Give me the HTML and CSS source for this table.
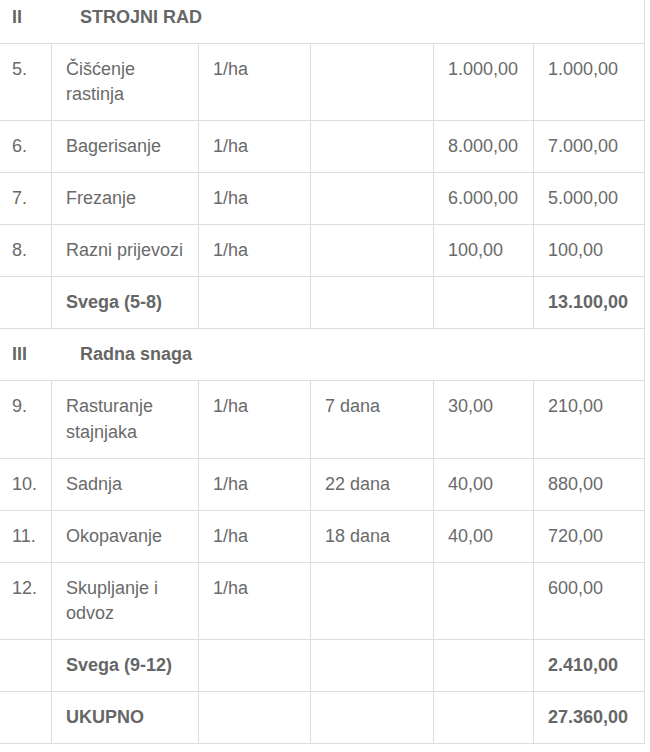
FILE: index.html
```html
<!DOCTYPE html>
<html lang="hr">
<head>
<meta charset="utf-8">
<title>Troškovi</title>
<link rel="stylesheet" href="styles.css">
</head>
<body>
<table class="cost-table">
  <colgroup>
    <col class="c1"><col class="c2"><col class="c3"><col class="c4"><col class="c5"><col class="c6">
  </colgroup>
  <tbody>
    <tr class="section">
      <td colspan="6"><span class="sec-num">II</span><span class="sec-title">STROJNI RAD</span></td>
    </tr>
    <tr>
      <td>5.</td><td>Čišćenje rastinja</td><td>1/ha</td><td></td><td>1.000,00</td><td>1.000,00</td>
    </tr>
    <tr>
      <td>6.</td><td>Bagerisanje</td><td>1/ha</td><td></td><td>8.000,00</td><td>7.000,00</td>
    </tr>
    <tr>
      <td>7.</td><td>Frezanje</td><td>1/ha</td><td></td><td>6.000,00</td><td>5.000,00</td>
    </tr>
    <tr>
      <td>8.</td><td>Razni prijevozi</td><td>1/ha</td><td></td><td>100,00</td><td>100,00</td>
    </tr>
    <tr class="total">
      <td></td><td>Svega (5-8)</td><td></td><td></td><td></td><td>13.100,00</td>
    </tr>
    <tr class="section">
      <td colspan="6"><span class="sec-num">III</span><span class="sec-title">Radna snaga</span></td>
    </tr>
    <tr>
      <td>9.</td><td>Rasturanje stajnjaka</td><td>1/ha</td><td>7 dana</td><td>30,00</td><td>210,00</td>
    </tr>
    <tr>
      <td>10.</td><td>Sadnja</td><td>1/ha</td><td>22 dana</td><td>40,00</td><td>880,00</td>
    </tr>
    <tr>
      <td>11.</td><td>Okopavanje</td><td>1/ha</td><td>18 dana</td><td>40,00</td><td>720,00</td>
    </tr>
    <tr>
      <td>12.</td><td>Skupljanje i odvoz</td><td>1/ha</td><td></td><td></td><td>600,00</td>
    </tr>
    <tr class="total">
      <td></td><td>Svega (9-12)</td><td></td><td></td><td></td><td>2.410,00</td>
    </tr>
    <tr class="total">
      <td></td><td>UKUPNO</td><td></td><td></td><td></td><td>27.360,00</td>
    </tr>
  </tbody>
</table>
</body>
</html>
```
FILE: styles.css
```css
html, body {
  margin: 0;
  padding: 0;
  background: #ffffff;
}

body {
  overflow: hidden;
  font-family: "Liberation Sans", Arial, sans-serif;
  font-size: 18px;
  line-height: 25.5px;
  color: #6a6a6a;
}

.cost-table {
  margin: -9.5px 0 0 -3px;
  border-collapse: separate;
  border-spacing: 0;
  table-layout: fixed;
  width: 648px;
  border-top: 1px solid #dedede;
  border-left: 1px solid #dedede;
}

.c1 { width: 54px; }
.c2 { width: 147px; }
.c3 { width: 112px; }
.c4 { width: 123px; }
.c5 { width: 100px; }
.c6 { width: 111px; }

.cost-table td {
  box-sizing: border-box;
  padding: 13px 10px 12.5px 14px;
  vertical-align: top;
  text-align: left;
  border-right: 1px solid #dedede;
  border-bottom: 1px solid #dedede;
}

.section td {
  font-weight: bold;
  color: #666666;
}

.sec-num {
  display: inline-block;
  width: 68px;
}

.total td {
  font-weight: bold;
  color: #666666;
}
```
